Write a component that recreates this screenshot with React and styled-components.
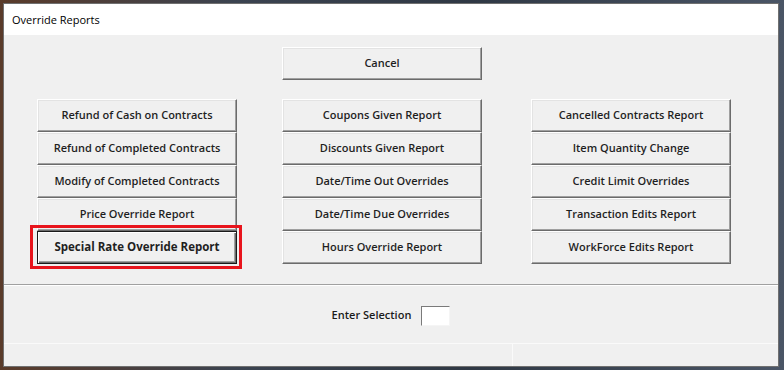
import React from 'react'
import styled, { createGlobalStyle } from 'styled-components'

const Global = createGlobalStyle`
  html, body {
    margin: 0;
    padding: 0;
    background: linear-gradient(90deg, #5a3b2a 0%, #3b4350 30%, #2f3844 60%, #4a5566 100%);
  }
  * { box-sizing: border-box; }
`;

const Window = styled.div`
  margin: 3px 5px 0 3px;
  width: 776px;
  height: 364px;
  border: 1px solid #707070;
  background: #f0f0f0;
  display: flex;
  flex-direction: column;
  font-family: "Open Sans", "Noto Sans", sans-serif;
  color: #1b1b1b;
`;

const TitleBar = styled.div`
  height: 31px;
  flex: none;
  background: #fff;
  padding-left: 8px;
  display: flex;
  align-items: center;
  font-size: 11px;
  color: #000;
`;

const Content = styled.div`
  height: 249px;
  flex: none;
  padding: 12px 0 0 33px;
  display: grid;
  grid-template-columns: 200px 45px 200px 49px 200px;
  grid-template-rows: 33px auto;
  row-gap: 19px;
  align-content: start;
`;

const Column = styled.div`
  display: flex;
  flex-direction: column;
  grid-column: ${p => p.col};
  grid-row: ${p => p.row};
`;

const Button = styled.button`
  position: relative;
  height: 33px;
  width: 200px;
  padding: 0 0 3px;
  margin: 0;
  background: #f0f0f0;
  font-family: inherit;
  font-size: ${p => (p.$default ? '11.5px' : '11px')};
  font-weight: ${p => (p.$default ? 700 : 600)};
  color: #1f1f1f;
  border: 1px solid;
  border-color: ${p => (p.$default ? '#1a1a1a' : '#ffffff #6b6b6b #6b6b6b #ffffff')};
  box-shadow: ${p => (p.$default
    ? 'inset 1px 1px 0 #ffffff, inset -1px -1px 0 #6b6b6b, inset -2px -2px 0 #a0a0a0'
    : 'inset -1px -1px 0 #a0a0a0, inset 1px 1px 0 #e3e3e3')};
  cursor: pointer;
`;

const Highlight = styled.span`
  position: absolute;
  left: -8px;
  top: -7px;
  right: -6px;
  bottom: -6px;
  border: 3px solid #e8141c;
  pointer-events: none;
`;

const Separator = styled.div`
  height: 2px;
  flex: none;
  border-top: 1px solid #a0a0a0;
  border-bottom: 1px solid #ffffff;
`;

const Footer = styled.div`
  height: 57px;
  flex: none;
  display: flex;
  align-items: center;
  justify-content: center;
  gap: 10px;
  font-size: 11px;
  font-weight: 600;
`;

const SelectionInput = styled.input`
  width: 29px;
  height: 20px;
  background: #fff;
  border: 1px solid;
  border-color: #7a7a7a #f5f5f5 #f5f5f5 #7a7a7a;
  margin-top: 2px;
  outline: none;
`;

const StatusBar = styled.div`
  flex: 1;
  display: grid;
  grid-template-columns: 509px 1fr;
  border-top: 1px solid #fafafa;
`;

const Pane = styled.div`
  border-right: ${p => (p.$divider ? '1px solid #fafafa' : 'none')};
`;

const left = [
  'Refund of Cash on Contracts',
  'Refund of Completed Contracts',
  'Modify of Completed Contracts',
  'Price Override Report',
]

const middle = [
  'Coupons Given Report',
  'Discounts Given Report',
  'Date/Time Out Overrides',
  'Date/Time Due Overrides',
  'Hours Override Report',
]

const right = [
  'Cancelled Contracts Report',
  'Item Quantity Change',
  'Credit Limit Overrides',
  'Transaction Edits Report',
  'WorkForce Edits Report',
]

export default function App () {
  return (
    <>
      <Global />
      <Window>
        <TitleBar>Override Reports</TitleBar>
        <Content>
          <Column col={3} row={1}>
            <Button>Cancel</Button>
          </Column>
          <Column col={1} row={2}>
            {left.map(t => <Button key={t}>{t}</Button>)}
            <Button $default>
              Special Rate Override Report
              <Highlight />
            </Button>
          </Column>
          <Column col={3} row={2}>
            {middle.map(t => <Button key={t}>{t}</Button>)}
          </Column>
          <Column col={5} row={2}>
            {right.map(t => <Button key={t}>{t}</Button>)}
          </Column>
        </Content>
        <Separator />
        <Footer>
          Enter Selection
          <SelectionInput />
        </Footer>
        <StatusBar>
          <Pane $divider />
          <Pane />
        </StatusBar>
      </Window>
    </>
  )
}
